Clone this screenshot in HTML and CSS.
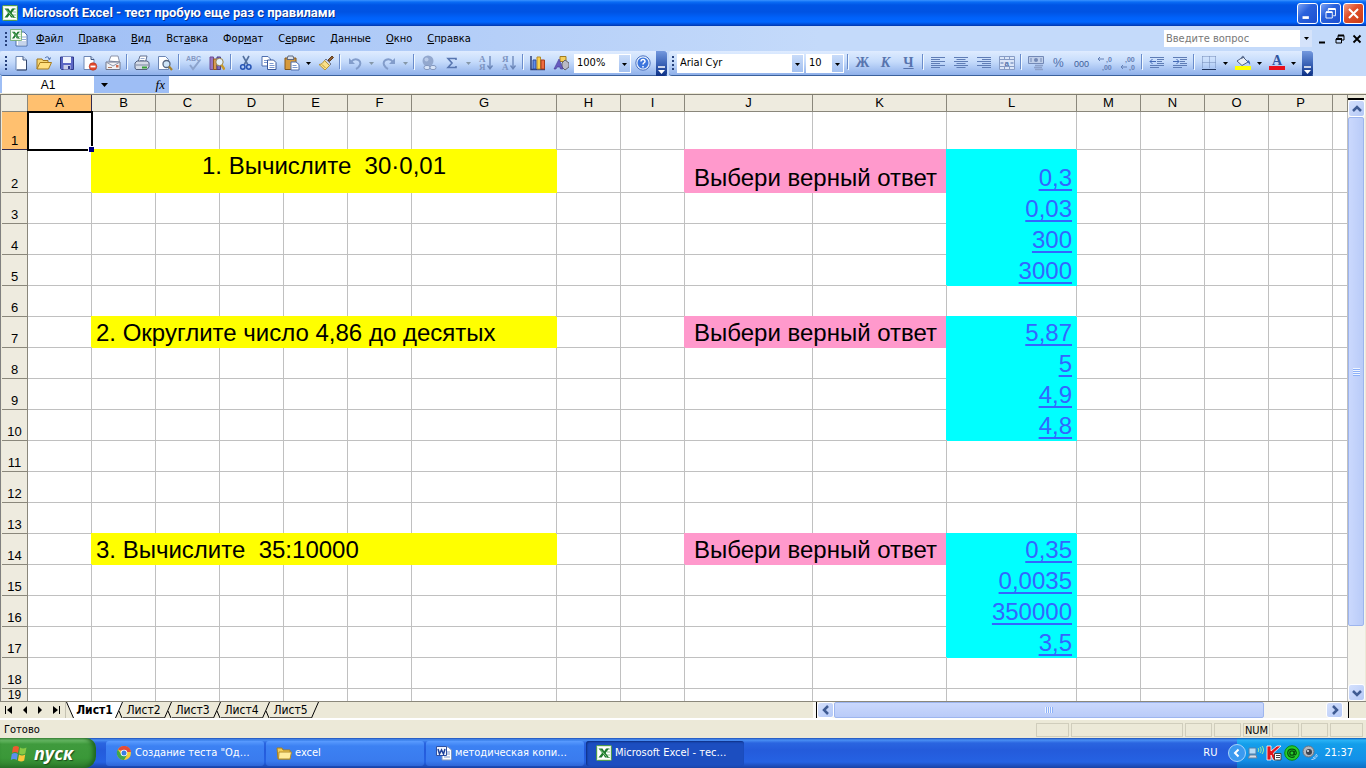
FILE: index.html
```html
<!DOCTYPE html>
<html lang="ru">
<head>
<meta charset="utf-8">
<title>Microsoft Excel - тест пробую еще раз с правилами</title>
<link rel="stylesheet" href="styles.css">
</head>
<body>
<svg class="defs" aria-hidden="true">
  <defs>
    <symbol id="xl" viewBox="0 0 16 16"><rect x=".5" y=".5" width="15" height="15" rx="1" fill="#dff0d8" stroke="#4f9a4f"/><rect x="2" y="2" width="12" height="12" fill="#fff"/><path d="M11 4h3M11 7h3M11 10h3M11 12.500h3" stroke="#8bbf8b"/><path d="M2.500 3.500h4l1.700 2.700L10 3.500h3L9.700 8l3.300 4.500H9L7.500 9.800 5.700 12.500H2.500L6 8z" fill="#1f7a2e"/><path d="M4 4.500l6.500 7" stroke="#8fcf8f"/></symbol>
    <symbol id="new" viewBox="0 0 16 16"><path d="M3 1.500h7l3.500 3.500v10H3z" fill="#fdfeff" stroke="#6d87b5"/><path d="M10 1.500V5h3.500" fill="#cddcf4" stroke="#3d5580"/><path d="M13.500 5v10H4" fill="none" stroke="#32456b"/></symbol>
    <symbol id="open" viewBox="0 0 16 16"><path d="M1 14V4h5l1 1.500h5V8" fill="#f7d774" stroke="#9b7420"/><path d="M1 14l3-6.500h11.500L12.500 14z" fill="#ffdf80" stroke="#a87b1c"/><path d="M9 3c2-2 4-1 4.500 1M12 3.500l1.700 1 .8-2" fill="none" stroke="#4668a8"/></symbol>
    <symbol id="save" viewBox="0 0 16 16"><path d="M1.500 2h13v12.500h-12l-1-1z" fill="#5b66c4" stroke="#303b8d"/><path d="M4 2h8v6H4z" fill="#eef2fd"/><path d="M4.500 10h7v4.500h-7z" fill="#c8cdea"/><path d="M9 11h2v3H9z" fill="#303b8d"/></symbol>
    <symbol id="perm" viewBox="0 0 16 16"><path d="M2 1.500h7l3 3v10H2z" fill="#fdfeff" stroke="#6d87b5"/><path d="M9 1.500v3h3" fill="#cddcf4" stroke="#3d5580"/><circle cx="11" cy="11.500" r="3.800" fill="#e2482b" stroke="#b5301c" stroke-width=".6"/><path d="M8.500 11.500h5" stroke="#fff" stroke-width="1.800"/></symbol>
    <symbol id="mail" viewBox="0 0 16 16"><path d="M4 6l2-5h7l1.500 6z" fill="#fff" stroke="#8c93a8"/><path d="M1 7h14v7.500H1z" fill="#f1f1f4" stroke="#70788e"/><path d="M1 7l7 4 7-4" fill="none" stroke="#9097aa"/><path d="M3 12.500h4" stroke="#b27b63"/><path d="M11 10h2.500v2.500H11z" fill="#d06c50"/></symbol>
    <symbol id="print" viewBox="0 0 16 16"><path d="M4 7l2-6h7l-1.500 6z" fill="#fff" stroke="#62708f"/><path d="M6.500 3.500h4M6 5.500h4" stroke="#9bacce"/><path d="M1 8l2-2h10l2 1.500V12l-2 2.500H2L1 13z" fill="#d5dbe7" stroke="#53617d"/><path d="M2 10h12" stroke="#7a87a0"/><path d="M8 12.500h5" stroke="#38a038" stroke-width="2"/></symbol>
    <symbol id="preview" viewBox="0 0 16 16"><path d="M1.500 1.500h7l3 3v10h-10z" fill="#fff" stroke="#6d87b5"/><circle cx="9.500" cy="9" r="3.500" fill="#cfe5f7" stroke="#56667f" stroke-width="1.300"/><path d="M12 11.500l3 3.500" stroke="#a8832a" stroke-width="2.200"/></symbol>
    <symbol id="spell" viewBox="0 0 16 16"><text x="0" y="6" font-size="7" font-weight="700" font-family="Liberation Sans, sans-serif" fill="#8498c2">ABC</text><path d="M4 10l3 4 7-9" fill="none" stroke="#8ca3cc" stroke-width="2"/></symbol>
    <symbol id="research" viewBox="0 0 16 16"><path d="M1 2h3.500v12.500H1z" fill="#9a77c0" stroke="#6d4d94"/><path d="M4.500 4H8v10.500H4.500z" fill="#d99a52" stroke="#8e5a25"/><path d="M8 2h3.500v12.500H8z" fill="#7d6cc0" stroke="#4d4189"/><circle cx="10.500" cy="7" r="3.700" fill="#e4f0fa" stroke="#9a8445"/><path d="M12.500 10l3 4.500" stroke="#c9992a" stroke-width="2.400"/></symbol>
    <symbol id="cut" viewBox="0 0 16 16"><path d="M5 1l5 9M11 1L6 10" stroke="#54719f" stroke-width="1.600"/><circle cx="4.800" cy="12" r="2.200" fill="none" stroke="#2553b4" stroke-width="1.500"/><circle cx="10.800" cy="12" r="2.200" fill="none" stroke="#2553b4" stroke-width="1.500"/></symbol>
    <symbol id="copy" viewBox="0 0 16 16"><path d="M1 1.500h6l2.500 2.500v7H1z" fill="#fff" stroke="#4f6fae"/><path d="M3 5.500h4M3 7.500h4" stroke="#7d99cf"/><path d="M6.500 5h6L15 7.500v7H6.500z" fill="#fff" stroke="#38589c"/><path d="M8.500 8.500h4M8.500 10.500h5M8.500 12.500h5" stroke="#7d99cf"/></symbol>
    <symbol id="paste" viewBox="0 0 16 16"><path d="M1 3h11v11.500H1z" fill="#d69a3c" stroke="#82571a"/><path d="M4 1h5l1 3.500H3z" fill="#dde2ea" stroke="#5d6880"/><path d="M7 7h5l3 2.500v5.500H7z" fill="#fff" stroke="#4f6fae"/><path d="M8.500 10.500h4M8.500 12.500h5" stroke="#7d99cf"/></symbol>
    <symbol id="brush" viewBox="0 0 16 16"><path d="M10 5l4-4 1.500 1.500-4 4z" fill="#8f5f33" stroke="#5e3c1c"/><path d="M8 4l5 5-1.500 1.500-5-5z" fill="#cfd4df" stroke="#707991"/><path d="M6.500 5.500l5 5L7 15 1 9.500c3 0 4-2 5.500-4z" fill="#f9e08a" stroke="#b8953a"/><path d="M4 9.500l3.500 3.500" stroke="#c19a33"/></symbol>
    <symbol id="undo" viewBox="0 0 16 16"><path d="M2 3v6h6z" fill="#839dcb"/><path d="M4 7c4-5 11-2 9 3-1 2-2 3-4 4" fill="none" stroke="#839dcb" stroke-width="2"/></symbol>
    <symbol id="redo" viewBox="0 0 16 16"><path d="M14 3v6H8z" fill="#839dcb"/><path d="M12 7C8 2 1 5 3 10c1 2 2 3 4 4" fill="none" stroke="#839dcb" stroke-width="2"/></symbol>
    <symbol id="link" viewBox="0 0 16 16"><circle cx="7" cy="6" r="5.500" fill="#93a8ce"/><circle cx="5.500" cy="4.500" r="2" fill="#b9cae8"/><rect x="3" y="10.500" width="6" height="4" rx="2" fill="#d6e3f7" stroke="#8398bf"/><rect x="9" y="10.500" width="6" height="4" rx="2" fill="#d6e3f7" stroke="#8398bf"/></symbol>
    <symbol id="sum" viewBox="0 0 16 16"><path d="M12 5V3.500H4l4 4.500-4 4.500h8V11" fill="none" stroke="#5876b0" stroke-width="1.600"/></symbol>
    <symbol id="az" viewBox="0 0 16 16"><g font-family="Liberation Serif, serif" font-size="9" font-weight="700" fill="#7c93c1"><text x="1" y="7">А</text><text x="1" y="15">Я</text></g><path d="M12 1v12M9.500 10.500L12 14l2.500-3.500" fill="none" stroke="#6b86b8" stroke-width="1.300"/></symbol>
    <symbol id="za" viewBox="0 0 16 16"><g font-family="Liberation Serif, serif" font-size="9" font-weight="700" fill="#7c93c1"><text x="1" y="7">Я</text><text x="1" y="15">А</text></g><path d="M12 1v12M9.500 10.500L12 14l2.500-3.500" fill="none" stroke="#6b86b8" stroke-width="1.300"/></symbol>
    <symbol id="chart" viewBox="0 0 16 16"><path d="M1 1v13.500h14" fill="none" stroke="#2c3f78" stroke-width="1.500"/><path d="M3 5h3v9H3z" fill="#5f8cea" stroke="#2f4d9b"/><path d="M7 2h3.500v12H7z" fill="#fbd24c" stroke="#b58a26"/><path d="M11 5h3.500v9H11z" fill="#ee6c3f" stroke="#a63c1c"/></symbol>
    <symbol id="draw" viewBox="0 0 16 16"><path d="M7 1.500h6v5H7z" fill="#f5cf5c" stroke="#a17c20"/><path d="M9 8l3-3 4 3v4l-4 3-3-3z" fill="#b9bac5" stroke="#62636f"/><path d="M1 14L6 4l4 10H7.500l-.7-2H4l-1 2z" fill="#675bc0" stroke="#453a96" stroke-width=".6"/></symbol>
    <symbol id="help" viewBox="0 0 16 16"><circle cx="8" cy="8" r="7.200" fill="#e6f0fd" stroke="#4c72c0"/><circle cx="8" cy="8" r="5.500" fill="#3d76dd"/><path d="M6 6.500c0-3 4.200-2.500 4 0-.1 1.300-2 1.300-2 3M8 11v1.500" fill="none" stroke="#fff" stroke-width="1.500"/></symbol>
    <symbol id="al" viewBox="0 0 16 16"><path d="M1 2.500h14M1 4.500h9M1 6.500h14M1 8.500h9M1 10.500h14M1 12.500h9" stroke="#5f7db6"/></symbol>
    <symbol id="ac" viewBox="0 0 16 16"><path d="M1 2.500h14M3.500 4.500h9M1 6.500h14M3.500 8.500h9M1 10.500h14M3.500 12.500h9" stroke="#5f7db6"/></symbol>
    <symbol id="ar" viewBox="0 0 16 16"><path d="M1 2.500h14M6 4.500h9M1 6.500h14M6 8.500h9M1 10.500h14M6 12.500h9" stroke="#5f7db6"/></symbol>
    <symbol id="merge" viewBox="0 0 16 16"><path d="M.5 1.500h15v13H.5zM.5 4.500h15M.5 11.500h15M5.500 1.500v3M10.500 1.500v3M5.500 11.500v3M10.500 11.500v3" fill="#dbe6f8" stroke="#879cc5"/><text x="5.500" y="10.500" font-size="8" font-weight="700" font-family="Liberation Sans, sans-serif" fill="#5572ab">a</text><path d="M1.500 8h3M11.500 8h3" stroke="#5572ab"/></symbol>
    <symbol id="money" viewBox="0 0 16 16"><path d="M.5 1.500h15v7H.5z" fill="#c0cfea" stroke="#7389b6"/><circle cx="8" cy="5" r="2" fill="#7389b6"/><path d="M3 3v4M13 3v4" stroke="#7389b6"/><path d="M7 10.500h8M6 12.500h8M7 14.500h8" stroke="#8ca0c9" stroke-width="1.300"/></symbol>
    <symbol id="pct" viewBox="0 0 16 16"><text x="2" y="12" font-size="12" font-family="Liberation Sans, sans-serif" fill="#4f6ea9">%</text></symbol>
    <symbol id="thou" viewBox="0 0 16 16"><text x="0" y="12" font-size="9" font-family="Liberation Sans, sans-serif" fill="#3f5e99">000</text></symbol>
    <symbol id="incd" viewBox="0 0 16 16"><g font-size="7" font-family="Liberation Sans, sans-serif" font-weight="700" fill="#6480b5"><text x="9" y="7">,0</text><text x="5" y="15">,00</text></g><path d="M1 4h6M3 2L1 4l2 2" fill="none" stroke="#6480b5"/></symbol>
    <symbol id="decd" viewBox="0 0 16 16"><g font-size="7" font-family="Liberation Sans, sans-serif" font-weight="700" fill="#6480b5"><text x="5" y="7">,00</text><text x="9" y="15">,0</text></g><path d="M1 12h6M3 10l-2 2 2 2" fill="none" stroke="#6480b5"/></symbol>
    <symbol id="outd" viewBox="0 0 16 16"><path d="M1 2.500h14M8 4.500h7M8 6.500h5M8 8.500h7M1 10.500h14M1 12.500h9" stroke="#5f7db6"/><path d="M1 6.500h6M3.500 4L1 6.500 3.500 9" fill="none" stroke="#4369b5"/></symbol>
    <symbol id="ind" viewBox="0 0 16 16"><path d="M1 2.500h14M8 4.500h7M8 6.500h5M8 8.500h7M1 10.500h14M1 12.500h9" stroke="#5f7db6"/><path d="M1 6.500h6M4.500 4L7 6.500 4.500 9" fill="none" stroke="#4369b5"/></symbol>
    <symbol id="bord" viewBox="0 0 16 16"><path d="M1.500 1.500h13M1.500 7.500h13M1.500 1.500v12M8.500 1.500v12M14.500 1.500v12" stroke="#7189b7" stroke-dasharray="1 1" fill="none"/><path d="M1 14.500h14" stroke="#20355f"/></symbol>
    <symbol id="fill" viewBox="0 0 16 16"><path d="M2 6l6-4 5 5-6 3.500z" fill="#e9eef6" stroke="#4d5f82"/><path d="M7 4c-1-3 2-4 2-1" fill="none" stroke="#4d5f82"/><path d="M13 5c2 1 2.500 3 2 5-1-2-2-2.500-3-3z" fill="#3d65b5"/><path d="M0 11h16v4H0z" fill="#ff0"/></symbol>
    <symbol id="color" viewBox="0 0 16 16"><text x="3" y="10" font-size="14" font-weight="700" font-family="Liberation Serif, serif" fill="#30559f">A</text><path d="M0 11h16v4H0z" fill="#e8101c"/></symbol>
    <symbol id="down" viewBox="0 0 5 3"><path d="M0 0h5L2.500 3z"/></symbol>
    <symbol id="chev" viewBox="0 0 10 10"><path d="M1 7l4-4 4 4" fill="none" stroke="#3f5b93" stroke-width="2.500"/></symbol>
    <symbol id="slash" viewBox="0 0 8 16"><path d="M.5 16L7.500 0" stroke="#000" fill="none"/></symbol>
    <symbol id="vee" viewBox="0 0 8 16"><path d="M.5 16L7.500 0M4 9l3 7" stroke="#000" fill="none"/></symbol>
  </defs>
</svg>

<div class="window">
  <header class="title">
    <svg class="i16"><use href="#xl"/></svg>
    <h1>Microsoft Excel - тест пробую еще раз с правилами</h1>
    <div class="caption">
      <button aria-label="Свернуть"><svg viewBox="0 0 21 21"><path d="M5 15h7" stroke="#fff" stroke-width="3"/></svg></button>
      <button aria-label="Восстановить"><svg viewBox="0 0 21 21"><path d="M8 8V5.500h8V13h-2.500M5.500 9h7v6.500h-7z" fill="none" stroke="#fff"/><path d="M8 5.500h8M5.500 9h7" stroke="#fff" stroke-width="2"/></svg></button>
      <button class="close" aria-label="Закрыть"><svg viewBox="0 0 21 21"><path d="M5.500 5.500l10 10M15.500 5.500l-10 10" stroke="#fff" stroke-width="2.200"/></svg></button>
    </div>
  </header>

  <nav class="menu">
    <i class="grip"></i>
    <svg class="doc" viewBox="0 0 18 18"><path d="M6 3h8l3 3v11H6z" fill="#fff" stroke="#4d6ea8"/><path d="M12 8h4M12 10.500h4M8 13h8M8 15h8" stroke="#8ea9d8"/><use href="#xl" width="12" height="12"/></svg>
    <button><u>Ф</u>айл</button><button><u>П</u>равка</button><button><u>В</u>ид</button><button>Вст<u>а</u>вка</button><button>Фор<u>м</u>ат</button><button>С<u>е</u>рвис</button><button><u>Д</u>анные</button><button><u>О</u>кно</button><button><u>С</u>правка</button>
    <div class="ask"><input type="text" placeholder="Введите вопрос" aria-label="Введите вопрос"><button aria-label="Вопросы"><svg class="tri"><use href="#down"/></svg></button></div>
    <div class="mdi">
      <button aria-label="Свернуть книгу"><svg viewBox="0 0 10 10"><path d="M1 8.500h6" stroke="#000" stroke-width="2"/></svg></button>
      <button aria-label="Восстановить книгу"><svg viewBox="0 0 10 10"><path d="M3 4V1.500h6V6H7M1 5h5.500v4H1z" fill="none" stroke="#000"/><path d="M3 1.500h6M1 5h6" stroke="#000" stroke-width="1.800"/></svg></button>
      <button aria-label="Закрыть книгу"><svg viewBox="0 0 10 10"><path d="M1.500 1.500l7 7M8.500 1.500l-7 7" stroke="#000" stroke-width="1.800"/></svg></button>
    </div>
  </nav>

  <div class="bars">
    <div class="bar">
      <i class="grip"></i>
      <button class="b" aria-label="Создать"><svg class="i16"><use href="#new"/></svg></button>
      <button class="b" aria-label="Открыть"><svg class="i16"><use href="#open"/></svg></button>
      <button class="b" aria-label="Сохранить"><svg class="i16"><use href="#save"/></svg></button>
      <button class="b" aria-label="Разрешения"><svg class="i16"><use href="#perm"/></svg></button>
      <button class="b" aria-label="Сообщение"><svg class="i16"><use href="#mail"/></svg></button>
      <i class="sep"></i>
      <button class="b" aria-label="Печать"><svg class="i16"><use href="#print"/></svg></button>
      <button class="b" aria-label="Просмотр"><svg class="i16"><use href="#preview"/></svg></button>
      <i class="sep"></i>
      <button class="b" aria-label="Орфография"><svg class="i16"><use href="#spell"/></svg></button>
      <button class="b" aria-label="Справочные материалы"><svg class="i16"><use href="#research"/></svg></button>
      <i class="sep"></i>
      <button class="b" aria-label="Вырезать"><svg class="i16"><use href="#cut"/></svg></button>
      <button class="b" aria-label="Копировать"><svg class="i16"><use href="#copy"/></svg></button>
      <button class="b" aria-label="Вставить"><svg class="i16"><use href="#paste"/></svg></button>
      <button class="d" aria-label="Варианты вставки"><svg class="tri"><use href="#down"/></svg></button>
      <button class="b" aria-label="Формат по образцу"><svg class="i16"><use href="#brush"/></svg></button>
      <i class="sep"></i>
      <button class="b" aria-label="Отменить"><svg class="i16"><use href="#undo"/></svg></button>
      <button class="d dim" aria-label="Список отмены"><svg class="tri"><use href="#down"/></svg></button>
      <button class="b" aria-label="Вернуть"><svg class="i16"><use href="#redo"/></svg></button>
      <button class="d dim" aria-label="Список возврата"><svg class="tri"><use href="#down"/></svg></button>
      <i class="sep"></i>
      <button class="b" aria-label="Гиперссылка"><svg class="i16"><use href="#link"/></svg></button>
      <button class="b" aria-label="Автосумма"><svg class="i16"><use href="#sum"/></svg></button>
      <button class="d dim" aria-label="Функции"><svg class="tri"><use href="#down"/></svg></button>
      <button class="b" aria-label="По возрастанию"><svg class="i16"><use href="#az"/></svg></button>
      <button class="b" aria-label="По убыванию"><svg class="i16"><use href="#za"/></svg></button>
      <i class="sep"></i>
      <button class="b" aria-label="Диаграмма"><svg class="i16"><use href="#chart"/></svg></button>
      <button class="b" aria-label="Рисование"><svg class="i16"><use href="#draw"/></svg></button>
      <span class="combo zoom"><select aria-label="Масштаб"><option>100%</option></select><svg class="tri"><use href="#down"/></svg></span>
      <button class="b" aria-label="Справка"><svg class="i16"><use href="#help"/></svg></button>
      <button class="cap" aria-label="Параметры панели"><svg viewBox="0 0 7 8"><path d="M0 1h7" stroke="#fff" stroke-width="1.500"/><path d="M0 4h7L3.500 8z" fill="#fff"/></svg></button>
    </div>
    <div class="bar">
      <i class="grip"></i>
      <span class="combo font"><select aria-label="Шрифт"><option>Arial Cyr</option></select><svg class="tri"><use href="#down"/></svg></span>
      <span class="combo size"><select aria-label="Размер"><option>10</option></select><svg class="tri"><use href="#down"/></svg></span>
      <i class="sep"></i>
      <button class="b letter bold">Ж</button><button class="b letter ital">К</button><button class="b letter under">Ч</button>
      <i class="sep"></i>
      <button class="b" aria-label="По левому краю"><svg class="i16"><use href="#al"/></svg></button>
      <button class="b" aria-label="По центру"><svg class="i16"><use href="#ac"/></svg></button>
      <button class="b" aria-label="По правому краю"><svg class="i16"><use href="#ar"/></svg></button>
      <button class="b" aria-label="Объединить"><svg class="i16"><use href="#merge"/></svg></button>
      <i class="sep"></i>
      <button class="b" aria-label="Денежный формат"><svg class="i16"><use href="#money"/></svg></button>
      <button class="b" aria-label="Процентный формат"><svg class="i16"><use href="#pct"/></svg></button>
      <button class="b" aria-label="Формат с разделителями"><svg class="i16"><use href="#thou"/></svg></button>
      <button class="b" aria-label="Увеличить разрядность"><svg class="i16"><use href="#incd"/></svg></button>
      <button class="b" aria-label="Уменьшить разрядность"><svg class="i16"><use href="#decd"/></svg></button>
      <i class="sep"></i>
      <button class="b" aria-label="Уменьшить отступ"><svg class="i16"><use href="#outd"/></svg></button>
      <button class="b" aria-label="Увеличить отступ"><svg class="i16"><use href="#ind"/></svg></button>
      <i class="sep"></i>
      <button class="b" aria-label="Границы"><svg class="i16"><use href="#bord"/></svg></button>
      <button class="d" aria-label="Виды границ"><svg class="tri"><use href="#down"/></svg></button>
      <button class="b" aria-label="Цвет заливки"><svg class="i16"><use href="#fill"/></svg></button>
      <button class="d" aria-label="Цвета заливки"><svg class="tri"><use href="#down"/></svg></button>
      <button class="b" aria-label="Цвет шрифта"><svg class="i16"><use href="#color"/></svg></button>
      <button class="d" aria-label="Цвета шрифта"><svg class="tri"><use href="#down"/></svg></button>
      <button class="cap" aria-label="Параметры панели"><svg viewBox="0 0 7 8"><path d="M0 1h7" stroke="#fff" stroke-width="1.500"/><path d="M0 4h7L3.500 8z" fill="#fff"/></svg></button>
    </div>
  </div>

  <div class="formula">
    <input class="name" type="text" value="A1" aria-label="Имя ячейки">
    <button class="namedrop" aria-label="Список имён"><svg viewBox="0 0 7 4"><path d="M0 0h7L3.500 4z"/></svg></button>
    <button class="fx" aria-label="Вставка функции">fx</button>
    <input class="expr" type="text" aria-label="Строка формул">
  </div>

  <main class="sheet">
    <div class="gridwrap">
      <table>
        <colgroup><col class="rh"><col class="c64" span="6"><col class="cg"><col class="c64" span="2"><col class="cj"><col class="ck"><col class="cl"><col class="c64" span="4"><col></colgroup>
        <thead>
          <tr><th></th><th class="sel">A</th><th>B</th><th>C</th><th>D</th><th>E</th><th>F</th><th>G</th><th>H</th><th>I</th><th>J</th><th>K</th><th>L</th><th>M</th><th>N</th><th>O</th><th>P</th><th></th></tr>
        </thead>
        <tbody>
          <tr class="r1"><th class="sel">1</th><td class="active"><span class="frame"></span></td><td></td><td></td><td></td><td></td><td></td><td></td><td></td><td></td><td></td><td></td><td></td><td></td><td></td><td></td><td></td><td></td></tr>
          <tr class="r2"><th>2</th><td></td><td class="q mid" colspan="6">1. Вычислите  30·0,01</td><td></td><td></td><td class="pick" colspan="2">Выбери верный ответ</td><td class="ans"><a href="#">0,3</a></td><td></td><td></td><td></td><td></td><td></td></tr>
          <tr><th>3</th><td></td><td></td><td></td><td></td><td></td><td></td><td></td><td></td><td></td><td></td><td></td><td class="ans"><a href="#">0,03</a></td><td></td><td></td><td></td><td></td><td></td></tr>
          <tr><th>4</th><td></td><td></td><td></td><td></td><td></td><td></td><td></td><td></td><td></td><td></td><td></td><td class="ans"><a href="#">300</a></td><td></td><td></td><td></td><td></td><td></td></tr>
          <tr><th>5</th><td></td><td></td><td></td><td></td><td></td><td></td><td></td><td></td><td></td><td></td><td></td><td class="ans"><a href="#">3000</a></td><td></td><td></td><td></td><td></td><td></td></tr>
          <tr><th>6</th><td></td><td></td><td></td><td></td><td></td><td></td><td></td><td></td><td></td><td></td><td></td><td></td><td></td><td></td><td></td><td></td><td></td></tr>
          <tr><th>7</th><td></td><td class="q" colspan="6">2. Округлите число 4,86 до десятых</td><td></td><td></td><td class="pick" colspan="2">Выбери верный ответ</td><td class="ans"><a href="#">5,87</a></td><td></td><td></td><td></td><td></td><td></td></tr>
          <tr><th>8</th><td></td><td></td><td></td><td></td><td></td><td></td><td></td><td></td><td></td><td></td><td></td><td class="ans"><a href="#">5</a></td><td></td><td></td><td></td><td></td><td></td></tr>
          <tr><th>9</th><td></td><td></td><td></td><td></td><td></td><td></td><td></td><td></td><td></td><td></td><td></td><td class="ans"><a href="#">4,9</a></td><td></td><td></td><td></td><td></td><td></td></tr>
          <tr><th>10</th><td></td><td></td><td></td><td></td><td></td><td></td><td></td><td></td><td></td><td></td><td></td><td class="ans"><a href="#">4,8</a></td><td></td><td></td><td></td><td></td><td></td></tr>
          <tr><th>11</th><td></td><td></td><td></td><td></td><td></td><td></td><td></td><td></td><td></td><td></td><td></td><td></td><td></td><td></td><td></td><td></td><td></td></tr>
          <tr><th>12</th><td></td><td></td><td></td><td></td><td></td><td></td><td></td><td></td><td></td><td></td><td></td><td></td><td></td><td></td><td></td><td></td><td></td></tr>
          <tr><th>13</th><td></td><td></td><td></td><td></td><td></td><td></td><td></td><td></td><td></td><td></td><td></td><td></td><td></td><td></td><td></td><td></td><td></td></tr>
          <tr><th>14</th><td></td><td class="q" colspan="6">3. Вычислите  35:10000</td><td></td><td></td><td class="pick" colspan="2">Выбери верный ответ</td><td class="ans"><a href="#">0,35</a></td><td></td><td></td><td></td><td></td><td></td></tr>
          <tr><th>15</th><td></td><td></td><td></td><td></td><td></td><td></td><td></td><td></td><td></td><td></td><td></td><td class="ans"><a href="#">0,0035</a></td><td></td><td></td><td></td><td></td><td></td></tr>
          <tr><th>16</th><td></td><td></td><td></td><td></td><td></td><td></td><td></td><td></td><td></td><td></td><td></td><td class="ans"><a href="#">350000</a></td><td></td><td></td><td></td><td></td><td></td></tr>
          <tr><th>17</th><td></td><td></td><td></td><td></td><td></td><td></td><td></td><td></td><td></td><td></td><td></td><td class="ans"><a href="#">3,5</a></td><td></td><td></td><td></td><td></td><td></td></tr>
          <tr><th>18</th><td></td><td></td><td></td><td></td><td></td><td></td><td></td><td></td><td></td><td></td><td></td><td></td><td></td><td></td><td></td><td></td><td></td></tr>
          <tr class="r19"><th>19</th><td></td><td></td><td></td><td></td><td></td><td></td><td></td><td></td><td></td><td></td><td></td><td></td><td></td><td></td><td></td><td></td><td></td></tr>
        </tbody>
      </table>
    </div>
    <div class="vscroll">
      <i class="split"></i>
      <button class="sb" aria-label="Вверх"><svg><use href="#chev"/></svg></button>
      <div class="vthumb"><i></i></div>
      <div class="rest"></div>
      <button class="sb flip" aria-label="Вниз"><svg><use href="#chev"/></svg></button>
    </div>
  </main>

  <div class="tabs">
    <div class="navs">
      <button aria-label="Первый лист"><svg viewBox="0 0 8 8"><path d="M.5 0v8" stroke="#000"/><path d="M7 0v8L2 4z"/></svg></button>
      <button aria-label="Предыдущий лист"><svg viewBox="0 0 8 8"><path d="M6 0v8L2 4z"/></svg></button>
      <button aria-label="Следующий лист"><svg viewBox="0 0 8 8"><path d="M2 0v8l4-4z"/></svg></button>
      <button aria-label="Последний лист"><svg viewBox="0 0 8 8"><path d="M1 0v8l5-4z"/><path d="M7.500 0v8" stroke="#000"/></svg></button>
    </div>
    <svg class="edge" viewBox="0 0 8 16"><path d="M0 0l7 16h1V0z" fill="#fff"/><path d="M.5 0l7 16" stroke="#000"/></svg>
    <button class="tab on">Лист1</button><svg class="edge" viewBox="0 0 8 16"><path d="M0 0h8L1 16H0z" fill="#fff"/><path d="M.5 16L7.500 0M4 9l3 7" stroke="#000" fill="none"/></svg>
    <button class="tab">Лист2</button><svg class="edge"><use href="#vee"/></svg>
    <button class="tab">Лист3</button><svg class="edge"><use href="#vee"/></svg>
    <button class="tab">Лист4</button><svg class="edge"><use href="#vee"/></svg>
    <button class="tab">Лист5</button><svg class="edge"><use href="#slash"/></svg>
    <div class="hscroll">
      <button class="sb left" aria-label="Влево"><svg><use href="#chev"/></svg></button>
      <div class="hthumb"><i></i></div>
      <div class="rest"></div>
      <button class="sb right" aria-label="Вправо"><svg><use href="#chev"/></svg></button>
    </div>
    <i class="corner"></i>
  </div>

  <footer class="status">
    <span class="ready">Готово</span>
    <i class="cell mid-cell"></i><i class="cell wide"></i><i class="cell"></i><i class="cell"></i><span class="cell">NUM</span><i class="cell"></i><i class="cell"></i><i class="cell mid-cell"></i>
  </footer>
</div>

<div class="taskbar">
  <button class="start"><svg viewBox="0 0 20 20"><path d="M3 4c2-1.500 4-1.500 6 0L8 10c-2-1.400-4-1.400-6 0z" fill="#ee5a30"/><path d="M10 4.500c2 1.300 4 1.300 6.500 0l-1.200 6c-2 1.200-4 1.200-6.200 0z" fill="#86c945"/><path d="M1.800 11c2-1.400 4-1.400 6 0l-1 6c-2-1.500-4-1.500-6 0z" fill="#5b8fee"/><path d="M9 11.500c2 1.200 4 1.200 6.200 0l-1 6c-2 1.200-4 1.200-6.300 0z" fill="#fac63a"/></svg>пуск</button>
  <button class="task"><svg class="i16" viewBox="0 0 16 16"><circle cx="8" cy="8" r="7" fill="#f7ca33"/><path d="M2 4.500A7 7 0 0 1 15 7H8z" fill="#e34a3a"/><path d="M1.800 4.500A7 7 0 0 0 8 15l3-5-6-1z" fill="#3fa64b"/><circle cx="8" cy="8" r="3.300" fill="#fff"/><circle cx="8" cy="8" r="2.500" fill="#3b7de0"/></svg><span>Создание теста "Од…</span></button>
  <button class="task"><svg class="i16" viewBox="0 0 16 16"><path d="M1 3h5l1 2h7v9H2z" fill="#f3cc55" stroke="#a67f20"/><path d="M3 7h12.500L14 14H2.500z" fill="#ffeb9c" stroke="#b28c2c"/></svg><span>excel</span></button>
  <button class="task"><svg class="i16" viewBox="0 0 16 16"><path d="M6 2h6l3.500 3v10H6z" fill="#fff" stroke="#8095bd"/><path d="M11 7h3M11 9h3M8 12h6" stroke="#7e98cc"/><path d="M.5 1.500h10v9H.5z" fill="#f0f5ff" stroke="#2f50a0"/><path d="M2 4l1.500 5L5.500 5l2 4L9 4" fill="none" stroke="#1c3f98" stroke-width="1.500"/></svg><span>методическая копи…</span></button>
  <button class="task on"><svg class="i16"><use href="#xl"/></svg><span>Microsoft Excel - тес…</span></button>
  <span class="lang">RU</span>
  <div class="tray">
    <button class="hide" aria-label="Скрыть значки"><svg viewBox="0 0 18 18"><circle cx="9" cy="9" r="8.500" fill="#3b9af0" stroke="#a9d4fa"/><path d="M10.500 5.500L7 9l3.500 3.500" fill="none" stroke="#fff" stroke-width="2"/></svg></button>
    <svg class="i16" viewBox="0 0 16 16"><path d="M1 3h7v6H1z" fill="#b9dcf5" stroke="#517eaa"/><path d="M0 13l2-3h6l1 3z" fill="#d7dde6" stroke="#6b84a0"/><path d="M10 3c1 1 1 3 0 4M12 2c1.500 2 1.500 4 0 6M14 1c2 3 2 5 0 8" fill="none" stroke="#a7ec9a"/></svg>
    <svg class="i16" viewBox="0 0 16 16"><path d="M1 1h4v5l6-5h4L7.500 8l3 7H7L5 10v5H1z" fill="#e3151b" stroke="#fff" stroke-width=".8"/><path d="M8.500 8.500h6.500v6.500H8.500z" fill="#fff" stroke="#444"/><path d="M10 10.500h4M10 12.500h4" stroke="#444"/></svg>
    <svg class="i16" viewBox="0 0 16 16"><circle cx="8" cy="8" r="7.300" fill="#26cc2c" stroke="#078a12"/><circle cx="8" cy="8" r="2.200" fill="none" stroke="#064f0b" stroke-width="1.300"/><path d="M10.200 6v3.500c1.500 1 2.500-1 2-2.500-1-4-8-4-8.500.5-.3 4 4 6 7 4" fill="none" stroke="#064f0b" stroke-width="1.200"/></svg>
    <svg class="i16" viewBox="0 0 16 16"><circle cx="6.500" cy="6.500" r="5.500" fill="#b4b8bf" stroke="#6b717c"/><circle cx="7" cy="7" r="3" fill="#3d4350"/><circle cx="6" cy="6" r="1" fill="#dfe4ec"/><path d="M11 13c2-1 3-2 3.500-4M9.500 14.500c3 0 5-2 6-4" fill="none" stroke="#bcd9f5"/></svg>
    <time>21:37</time>
  </div>
</div>
</body>
</html>
```
FILE: styles.css
```css
* { box-sizing: border-box; }
html, body { height: 100%; }
body {
  margin: 0;
  display: flex;
  flex-direction: column;
  overflow: hidden;
  font: 11px/14px "DejaVu Sans Condensed", "Liberation Sans", sans-serif;
  color: #000;
  background: #ece9d8;
}
button, input, select { font: inherit; color: inherit; border: 0; padding: 0; margin: 0; background: none; border-radius: 0; }
svg { display: block; flex: none; }
.defs { position: absolute; width: 0; height: 0; }
.i16 { width: 16px; height: 16px; }
.tri { width: 5px; height: 3px; }
.window { flex: 1; min-height: 0; display: flex; flex-direction: column; }

.title {
  height: 26px;
  display: flex;
  align-items: center;
  gap: 4px;
  padding: 0 2px;
  background: linear-gradient(#3a93ff 0, #0a6cf5 2px, #0055e5 5px, #0053e3 12px, #0062fb 18px, #0066ff 22px, #0044c8 25px, #0035a5 26px);
}
.title h1 { flex: 1; margin: 0; color: #fff; font: bold 13px/16px Roboto, "Noto Sans", sans-serif; text-shadow: 1px 1px 0 #0a2f8e; }
.caption { display: flex; gap: 2px; }
.caption button { width: 21px; height: 21px; border: 1px solid #fff; border-radius: 3px; background: linear-gradient(135deg, #7ba3f5, #2a62dc 40%, #1c4fd0); }
.caption button.close { background: linear-gradient(135deg, #f0a088, #e0512c 40%, #c93a14); }
.caption svg { width: 19px; height: 19px; }

.menu { height: 25px; display: flex; align-items: center; background: linear-gradient(90deg, #9ebef5, #c4dafa 60%); }
.grip { flex: none; width: 2px; height: 14px; margin: 0 2px 0 5px; background: repeating-linear-gradient(#27417c 0 2px, transparent 2px 4px); }
.doc { width: 18px; height: 18px; margin: 0 1px 2px 1px; }
.menu > button { padding: 0 8px 0 7px; height: 20px; }
.ask { margin-left: auto; display: flex; width: 150px; height: 19px; background: #fff; border: 1px solid #c4dafa; }
.ask input { flex: 1; min-width: 0; padding: 0 2px; }
.ask input::placeholder { color: #777; opacity: 1; }
.ask button { width: 12px; display: grid; place-items: center; background: #d5e3fa; }
.mdi { display: flex; gap: 7px; padding: 0 4px 0 5px; }
.mdi svg { width: 10px; height: 10px; }

.bars { height: 25px; display: flex; gap: 2px; background: #c4dafa; }
.bar {
  display: flex;
  align-items: center;
  border-bottom: 1px solid #3b619c;
  border-radius: 3px 0 0 3px;
  background: linear-gradient(#dfecff, #c5dbfb 45%, #8fb0ea);
}
.bar + .bar .grip { margin: 0 3px; }
.b { width: 23px; height: 22px; display: grid; place-items: center; flex: none; }
.d { width: 11px; height: 22px; display: grid; place-items: center; flex: none; }
.dim { fill: #8597a8; }
.sep { flex: none; width: 6px; height: 18px; background: linear-gradient(#6a8ccb, #6a8ccb) 2px 0 / 1px 15px no-repeat, linear-gradient(#f1f9ff, #f1f9ff) 3px 1px / 1px 15px no-repeat; }
.combo { position: relative; height: 19px; background: #fff; border: 1px solid #fff; flex: none; }
.combo select { appearance: none; width: 100%; height: 17px; padding-left: 2px; background: linear-gradient(#c9dcf9, #a3c0f0) right / 11px 17px no-repeat; }
.combo .tri { position: absolute; right: 3px; top: 8px; pointer-events: none; }
.zoom { width: 57px; margin: 0 0 0 2px; }
.font { width: 127px; }
.size { width: 38px; margin: 0 1px 0 2px; }
.letter { color: #5774ae; font: bold 14px/16px "Liberation Serif", serif; }
.ital { font-style: italic; }
.under { text-decoration: underline; }
.cap { width: 11px; height: 25px; margin-left: 3px; display: grid; place-items: end center; padding-bottom: 2px; border-radius: 0 3px 3px 0; background: linear-gradient(#7398de, #3c65b8 50%, #0b2f84); }
.bar:first-child .cap { margin-left: 2px; }
.cap svg { width: 7px; height: 8px; }

.formula { height: 18px; display: flex; background: #9ebef5; border-bottom: 1px solid #ece9d8; padding-left: 2px; }
.name { width: 92px; background: #fff; text-align: center; font: 12px/16px "Liberation Sans", sans-serif; }
.namedrop { width: 20px; display: grid; place-items: center; }
.namedrop svg { width: 7px; height: 4px; }
.fx { width: 55px; text-align: right; padding-right: 4px; font: italic 13px/16px "Liberation Serif", serif; }
.expr { flex: 1; background: #fff; }

.sheet { flex: 1; min-height: 0; display: flex; border-top: 1px solid #7f7c70; border-left: 1px solid #808080; padding-left: 1px; }
.gridwrap { flex: 1; min-width: 0; overflow: hidden; background: #fff; }
table { width: 100%; table-layout: fixed; border-collapse: separate; border-spacing: 0; font-family: "Liberation Sans", sans-serif; }
.rh { width: 26px; }
.c64 { width: 64px; }
.cg { width: 145px; }
.cj { width: 128px; }
.ck { width: 134px; }
.cl { width: 130px; }
tr { height: 31px; }
thead tr { height: 17px; }
.r1 { height: 38px; }
.r2 { height: 43px; }
th { padding: 0; font-weight: 400; font-size: 13px; line-height: 16px; color: #000; background: #eeebdf; border-right: 1px solid #8a877b; border-bottom: 1px solid #8a877b; vertical-align: bottom; }
thead th { vertical-align: middle; }
.r19 th { vertical-align: top; font-size: 12px; line-height: 12px; }
th.sel { background: #ffc06f; border-color: #302a50; }
td { padding: 0; border-right: 1px solid #c0c0c0; border-bottom: 1px solid #c0c0c0; font-size: 24px; line-height: 28px; vertical-align: bottom; white-space: pre; }
.q { background: #ff0; border-color: #ff0; padding-left: 4px; box-shadow: -1px -1px 0 #ff0; }
.mid { text-align: center; vertical-align: top; padding: 2px 0 0; }
.pick { background: #f9c; border-color: #f9c; text-align: center; box-shadow: -1px -1px 0 #f9c; }
.ans { background: #0ff; border-color: #0ff; text-align: right; padding-right: 4px; box-shadow: -1px -1px 0 #0ff; }
.ans a { color: #36f; text-decoration: underline; text-decoration-thickness: 2px; text-underline-offset: 3px; text-decoration-skip-ink: none; }
.active { position: relative; }
.frame { position: absolute; inset: -1px -2px -2px -1px; border: 2px solid #000; z-index: 1; }
.frame::after { content: ""; position: absolute; right: -3px; bottom: -3px; width: 5px; height: 5px; background: #000080; border: solid #fff; border-width: 1px 0 0 1px; }

.vscroll { width: 18px; display: flex; flex-direction: column; background: #f5f4ee; border-right: 1px solid #ece9d8; }
.split { height: 5px; margin-right: 1px; background: #ece9d8; border-bottom: 2px solid #000; }
.sb { flex: none; width: 17px; height: 17px; display: grid; place-items: center; border: 1px solid #fff; border-radius: 3px; background: linear-gradient(135deg, #d5e1fd, #b4c8f6); }
.sb svg { width: 10px; height: 10px; }
.flip svg { transform: rotate(180deg); }
.left svg { transform: rotate(-90deg); }
.right svg { transform: rotate(90deg); }
.vthumb, .hthumb { display: grid; place-items: center; border: 1px solid #9db5ee; border-radius: 2px; }
.vthumb { flex: 510; width: 16px; background: linear-gradient(90deg, #cad8fd, #b9cbf8); }
.vthumb i { width: 7px; height: 8px; background: repeating-linear-gradient(#eef4fe 0 1px, #8cb0f8 1px 2px); }
.vscroll .rest { flex: 58; }

.tabs { height: 17px; flex: none; display: flex; border-top: 1px solid #8a877b; padding-left: 1px; background: #ece9d8; }
.navs { display: flex; width: 65px; padding-right: 1px; border-right: 1px solid #c5c2b2; }
.navs button { flex: 1; display: grid; place-items: center; }
.navs svg { width: 8px; height: 8px; }
.edge { width: 8px; height: 16px; }
.tab { width: 41px; text-align: center; font-size: 12px; border-bottom: 1px solid #55524a; }
.tab.on { background: #fff; font-weight: 700; border-color: #fff; }
.hscroll { margin-left: auto; width: 40%; max-width: 532px; display: flex; background: #f5f4ee; border-left: 1px solid #000; box-shadow: -3px 0 0 #fbfaf5; }
.hthumb { flex: 430; background: linear-gradient(#cad8fd, #b9cbf8); }
.hthumb i { width: 8px; height: 6px; background: repeating-linear-gradient(90deg, #eef4fe 0 1px, #8cb0f8 1px 2px); }
.hscroll .rest { flex: 62; }
.hscroll .sb { height: 16px; }
.hscroll .right { margin-right: 5px; }
.corner { width: 18px; border-left: 1px solid #000; }

.status { height: 20px; flex: none; display: flex; align-items: center; gap: 2px; padding: 2px 3px 0 4px; border-top: 2px solid #fff; background: #ece9d8; }
.ready { flex: 1; }
.cell { width: 27px; height: 14px; border: 1px solid #d0cdbc; white-space: nowrap; text-align: center; line-height: 13px; }
.mid-cell { width: 33px; }
.wide { width: 112px; }

.taskbar { height: 30px; flex: none; display: flex; align-items: center; gap: 2px; color: #fff; background: linear-gradient(#1f50b8 0, #4a90f4 2px, #2a65e0 5px, #245bdb 12px, #2562e3 24px, #1941a5 30px); }
.start { width: 96px; height: 30px; margin-right: 8px; display: flex; align-items: center; gap: 4px; padding-left: 10px; border-radius: 0 10px 12px 0; font: italic bold 18px/22px "Open Sans", sans-serif; text-shadow: 1px 1px 1px #1a4a1a; background: linear-gradient(#4f9a4c 0, #6fc06c 2px, #3f9a3d 6px, #3a9838 20px, #2d7a2c 30px); box-shadow: inset -3px 0 4px #1e641e; }
.start svg { width: 20px; height: 20px; }
.task { flex: 0 1 158px; min-width: 0; height: 25px; display: flex; align-items: center; gap: 3px; padding: 0 10px; border-radius: 3px; background: linear-gradient(#5a9cff, #3c81f3 5px, #3a7bee 20px, #2f66d8); }
.task span { white-space: nowrap; }
.task.on { background: #1c4ec0; box-shadow: inset 1px 1px 2px #0d2f80; }
.lang { margin-left: auto; padding-right: 18px; }
.tray { height: 30px; display: flex; align-items: center; gap: 2px; padding-right: 13px; background: linear-gradient(#0c59b9 0, #2ab3f6 2px, #139eea 6px, #1290e8 22px, #0d6fc4 30px); }
.hide { margin-left: -9px; }
.hide svg { width: 18px; height: 18px; }
.tray time { padding-left: 4px; }
```
